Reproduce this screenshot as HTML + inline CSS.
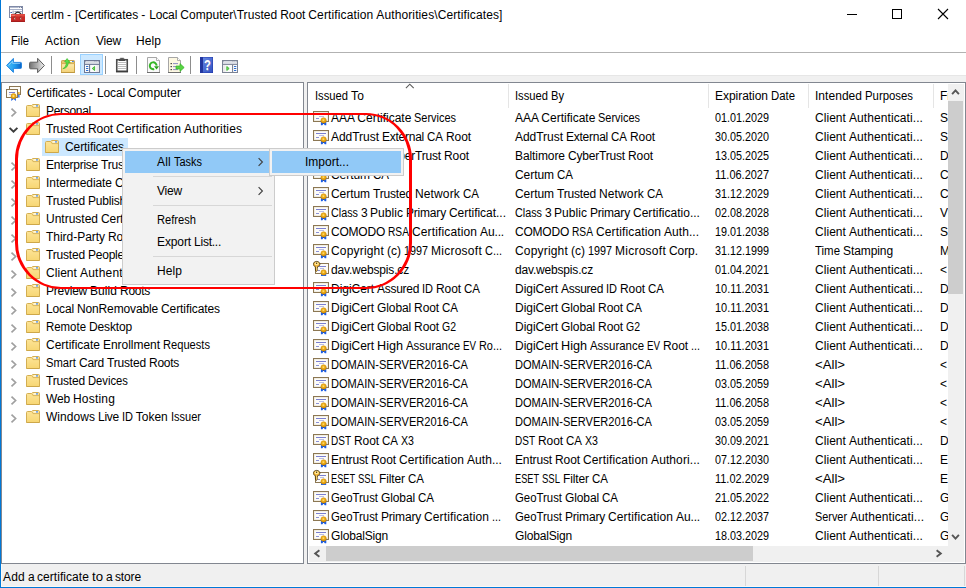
<!DOCTYPE html>
<html><head><meta charset="utf-8"><title>certlm</title>
<style>
html,body{margin:0;padding:0;background:#fff;}
body{width:966px;height:588px;position:relative;overflow:hidden;font-family:"Liberation Sans", sans-serif;font-size:12px;color:#000;}
.w{display:inline-block;transform-origin:0 0;vertical-align:top;}
.t{position:absolute;white-space:nowrap;font-family:"Liberation Sans", sans-serif;font-size:12px;color:#000;}
</style></head><body>

<svg width="0" height="0" style="position:absolute">
<defs>
<linearGradient id="gFold" x1="0" y1="0" x2="0" y2="1"><stop offset="0" stop-color="#fde59a"/><stop offset="1" stop-color="#f7d673"/></linearGradient>
<linearGradient id="gFold2" x1="0" y1="0" x2="0" y2="1"><stop offset="0" stop-color="#fdebad"/><stop offset="1" stop-color="#f3d177"/></linearGradient>
<linearGradient id="gBack" x1="0" y1="0" x2="1" y2="0"><stop offset="0" stop-color="#4fc0f8"/><stop offset="0.55" stop-color="#1e9cee"/><stop offset="1" stop-color="#0a5fc4"/></linearGradient>
<linearGradient id="gFwd" x1="0" y1="0" x2="1" y2="0"><stop offset="0" stop-color="#747474"/><stop offset="0.55" stop-color="#b4b4b4"/><stop offset="1" stop-color="#f2f2f2"/></linearGradient>
<linearGradient id="gHelp" x1="0" y1="0" x2="1" y2="1"><stop offset="0" stop-color="#6c8ee8"/><stop offset="1" stop-color="#2f4fc0"/></linearGradient>
<radialGradient id="gSeal" cx="0.45" cy="0.4" r="0.6"><stop offset="0" stop-color="#fbc93c"/><stop offset="1" stop-color="#d88e00"/></radialGradient>
<symbol id="folder" viewBox="0 0 14 13">
  <path d="M0.5 2.5 Q0.5 1.5 1.5 1.5 H5.6 L6.6 0.5 H12.5 Q13.5 0.5 13.5 1.5 V12.5 H0.5 Z" fill="url(#gFold)" stroke="#d3ae52" stroke-width="1"/>
  <path d="M6 1.9 L7 3.6 H13" fill="none" stroke="#d9b65c" stroke-width="1"/>
  <rect x="7.6" y="1.3" width="4.4" height="1.2" fill="#ffffff"/>
  <rect x="10" y="1.3" width="2" height="1.2" fill="#3f86e8"/>
  <rect x="0.5" y="12" width="13" height="1" fill="#c9a244" opacity="0.6"/>
</symbol>
<symbol id="cert" viewBox="0 0 16 16">
  <rect x="0.5" y="1.5" width="15" height="10" fill="#fdfcf8" stroke="#8c7753" stroke-width="1"/>
  <rect x="1.3" y="2.3" width="13.4" height="8.4" fill="none" stroke="#e9e4d8" stroke-width="0.6"/>
  <rect x="3" y="4" width="10" height="1" fill="#7a7fd0"/>
  <rect x="6" y="6.1" width="5" height="0.8" fill="#a9addf"/>
  <rect x="3" y="8" width="3" height="1" fill="#8a8fd6"/>
  <path d="M7.9 11 L7.9 15.2 L9.4 15.2 L10.6 13.4 L11.8 15.2 L13.3 15.2 L13.3 11 Z" fill="#1a5ce6"/>
  <path d="M9.9 13 L10.6 14 L11.3 13 Z" fill="#0a2a7a"/>
  <circle cx="10.6" cy="10.4" r="2.7" fill="url(#gSeal)" stroke="#d28f00" stroke-width="0.5"/>
  <circle cx="10.4" cy="10.3" r="0.8" fill="#ffdc70"/>
</symbol>
<symbol id="certkey" viewBox="0 0 16 16">
  <rect x="2.5" y="3.5" width="13" height="10" fill="#fdfcf8" stroke="#8c7753" stroke-width="1"/>
  <rect x="5.5" y="6" width="7.5" height="1" fill="#7a7fd0"/>
  <rect x="7" y="8.1" width="4" height="0.8" fill="#a9addf"/>
  <rect x="5" y="10" width="2" height="1" fill="#8a8fd6"/>
  <path d="M8 13 L8 16 L13.2 16 L13.2 13 Z" fill="#1e62e8"/>
  <circle cx="10.6" cy="12.4" r="2.7" fill="url(#gSeal)" stroke="#d28f00" stroke-width="0.5"/>
  <circle cx="10.4" cy="12.3" r="0.8" fill="#ffdc70"/>
  <g transform="translate(0,0.8)">
  <path d="M3.6 0.6 C1.6 0.6 0.3 1.9 0.3 3.4 C0.3 4.6 1.2 5.5 2.3 5.9 L2.5 9.8 L3.5 10.5 L4.5 9.6 L4.1 8.9 L4.7 8.3 L4.2 7.6 L4.6 5.9 C6 5.5 6.9 4.6 6.9 3.4 C6.9 1.9 5.6 0.6 3.6 0.6 Z" fill="#f0b030" stroke="#3a2806" stroke-width="0.75"/>
  <path d="M3.1 5.6 L3.2 9.4 L3.8 9.4 L3.7 5.6 Z" fill="#ffe9a0"/>
  <ellipse cx="3.7" cy="2.9" rx="2.1" ry="1.6" fill="#ffe79a"/>
  <circle cx="3.6" cy="2.5" r="0.7" fill="#4a3508"/>
</g>
</symbol>
<symbol id="certroot" viewBox="0 0 16 16">
  <rect x="3.5" y="0.5" width="11" height="8" fill="#fdfcf8" stroke="#8c7753" stroke-width="1"/>
  <rect x="0.5" y="3.5" width="11" height="8" fill="#fdfcf8" stroke="#8c7753" stroke-width="1"/>
  <rect x="3" y="6" width="6" height="1" fill="#7a7fd0"/>
  <rect x="3" y="8" width="3" height="0.8" fill="#a9addf"/>
  <path d="M5.4 11 L5.2 15 L7.6 13 L10 15 L9.8 11 Z" fill="#1e62e8"/>
  <rect x="12.1" y="6" width="1.5" height="2.7" fill="#e7a416"/>
  <rect x="12.2" y="8.6" width="1.3" height="3" fill="#1e62e8"/>
  <circle cx="7.6" cy="10.2" r="2.6" fill="url(#gSeal)" stroke="#d28f00" stroke-width="0.5"/>
  <circle cx="7.5" cy="10.1" r="0.9" fill="#ffe58a"/>
</symbol>
</defs>
</svg>

<div style="position:absolute;left:0px;top:52px;width:966px;height:1px;background:#b2b2b2"></div><div style="position:absolute;left:0px;top:75px;width:966px;height:7px;background:#f0f0f0"></div><div style="position:absolute;left:0px;top:75px;width:966px;height:1px;background:#e6e6e6"></div><div style="position:absolute;left:0px;top:82px;width:966px;height:506px;background:#f0f0f0"></div><div style="position:absolute;left:1px;top:82px;width:303px;height:482px;background:#fff;border:1px solid #828790;box-sizing:border-box"></div><div style="position:absolute;left:307px;top:82px;width:659px;height:482px;background:#fff;border:1px solid #828790;box-sizing:border-box"></div><div style="position:absolute;left:0px;top:564px;width:966px;height:23px;background:#f0f0f0"></div><div style="position:absolute;left:745px;top:566px;width:1px;height:20px;background:#d7d7d7"></div><div style="position:absolute;left:878px;top:566px;width:1px;height:20px;background:#d7d7d7"></div><div style="position:absolute;left:964px;top:566px;width:1px;height:20px;background:#d7d7d7"></div><div style="position:absolute;left:1px;top:564px;width:1px;height:23px;background:#fbf8f5"></div><div style="position:absolute;left:1px;top:586px;width:965px;height:1px;background:#fbf8f5"></div><div style="position:absolute;left:0px;top:0px;width:1px;height:588px;background:#0078d7"></div><div style="position:absolute;left:0px;top:587px;width:966px;height:1px;background:#0078d7"></div><svg style="position:absolute;left:8px;top:5px" width="18" height="18" viewBox="0 0 18 18">
<rect x="1.5" y="1.5" width="13" height="11" fill="#fdfdfe" stroke="#7f89a6" stroke-width="1"/>
<rect x="2" y="2" width="8.6" height="1" fill="#b4bccf"/>
<rect x="11.2" y="2" width="1" height="1" fill="#6b7693"/><rect x="13" y="2" width="1" height="1" fill="#6b7693"/>
<rect x="2" y="4" width="12" height="1" fill="#a9b2c9"/>
<rect x="4.6" y="5.6" width="1" height="7" fill="#9aa4bd"/>
<rect x="2.4" y="7" width="1.6" height="1" fill="#3d65b0"/>
<rect x="6.4" y="6" width="8" height="0.9" fill="#9aa4bd"/>
<path d="M6.4 9.6 Q9.9 4.6 13.4 9.6" fill="none" stroke="#2e2e2e" stroke-width="1.3"/>
<rect x="3" y="9" width="14" height="8" rx="0.7" fill="#c92b27"/>
<rect x="3" y="9" width="14" height="2.4" rx="0.7" fill="#dc4a40"/>
<rect x="3.6" y="10" width="3.4" height="0.7" fill="#ee8a80"/>
<rect x="3" y="15.8" width="14" height="1.2" fill="#a51c1c"/>
<rect x="6" y="12" width="1.4" height="2.6" fill="#e4d6c8" stroke="#8e1f1c" stroke-width="0.5"/><rect x="12" y="12" width="1.4" height="2.6" fill="#e4d6c8" stroke="#8e1f1c" stroke-width="0.5"/>
</svg><span class="t" style="left:31px;top:6px;line-height:18px;word-spacing:-0.34px;"><span style="letter-spacing:0.06px">certlm</span> <span style="letter-spacing:1.01px">-</span> <span style="letter-spacing:-0.02px">[Certificates</span> <span style="letter-spacing:1.01px">-</span> <span style="letter-spacing:-0.13px">Local</span> <span style="letter-spacing:0.05px">Computer\Trusted</span> <span style="letter-spacing:-0.08px">Root</span> <span style="letter-spacing:0.13px">Certification</span> <span style="letter-spacing:0.11px">Authorities\Certificates]</span></span><div style="position:absolute;left:847px;top:14px;width:10px;height:1px;background:#000"></div><div style="position:absolute;left:892px;top:9px;width:10px;height:10px;border:1px solid #000;box-sizing:border-box"></div><svg style="position:absolute;left:937px;top:8px" width="12" height="12" viewBox="0 0 12 12"><path d="M1 1 L11 11 M11 1 L1 11" stroke="#000" stroke-width="1.1" fill="none"/></svg><span class="t" style="left:11px;top:32px;line-height:18px;"><span class="w" style="width:18.00px;transform:scaleX(0.9305)">File</span></span><span class="t" style="left:45px;top:32px;line-height:18px;"><span style="letter-spacing:0.27px">Action</span></span><span class="t" style="left:96px;top:32px;line-height:18px;"><span style="letter-spacing:-0.20px">View</span></span><span class="t" style="left:136px;top:32px;line-height:18px;"><span style="letter-spacing:0.08px">Help</span></span><svg style="position:absolute;left:6px;top:57px" width="18" height="17" viewBox="0 0 18 17"><path d="M0.6 8.4 L7.4 1.4 L7.4 5.4 L14.6 5.4 Q15.5 5.4 15.5 6.3 L15.5 10.5 Q15.5 11.4 14.6 11.4 L7.4 11.4 L7.4 15.4 Z" fill="url(#gBack)" stroke="#2486e0" stroke-width="1" stroke-linejoin="round"/><path d="M2.6 8.4 L6.6 4.3 L6.6 6.4 L14.2 6.4" fill="none" stroke="#a8e0ff" stroke-width="0.9" opacity="0.75"/></svg><svg style="position:absolute;left:28px;top:57px" width="18" height="17" viewBox="0 0 18 17"><path d="M16.4 8.5 L9.6 1.3 L9.6 5.2 L2.6 5.2 Q1.6 5.2 1.6 6.2 L1.6 10.8 Q1.6 11.8 2.6 11.8 L9.6 11.8 L9.6 15.7 Z" fill="url(#gFwd)" stroke="#5d5d5d" stroke-width="1" stroke-linejoin="round"/></svg><div style="position:absolute;left:51px;top:56px;width:1px;height:18px;background:#8d8d8d"></div><div style="position:absolute;left:105px;top:56px;width:1px;height:18px;background:#8d8d8d"></div><div style="position:absolute;left:136px;top:56px;width:1px;height:18px;background:#8d8d8d"></div><div style="position:absolute;left:190px;top:56px;width:1px;height:18px;background:#8d8d8d"></div><svg style="position:absolute;left:60px;top:57px" width="16" height="17" viewBox="0 0 16 17">
<path d="M1.5 7 V4.3 Q1.5 3.5 2.3 3.5 H13.7 Q14.5 3.5 14.5 4.3 V7 Z" fill="#e8c46c" stroke="#c9a250" stroke-width="1"/>
<rect x="10" y="4" width="2.2" height="1" fill="#ffffff"/><rect x="12" y="4" width="1.8" height="1" fill="#3f8ae8"/>
<rect x="1.5" y="6.6" width="13" height="8.9" fill="url(#gFold2)" stroke="#d4ae58" stroke-width="1"/>
<rect x="1" y="15" width="14" height="1" fill="#bf9840"/>
<rect x="14" y="7" width="1" height="8.5" fill="#c9a24a"/>
<path d="M2.8 11.7 C5 10.8 6.3 8.4 6.3 5.3 L4.6 4.8 L7.1 1.5 L10.2 5.8 L8.3 5.4 C8.3 9 6.3 11.4 2.8 11.7 Z" fill="#5bdc48" stroke="#35b828" stroke-width="0.6"/>
</svg><div style="position:absolute;left:80px;top:54px;width:23px;height:21px;background:#cce8ff;border:1px solid #99d1ff;box-sizing:border-box"></div><svg style="position:absolute;left:84px;top:60px" width="16" height="13" viewBox="0 0 16 13">
<rect x="0.5" y="0.5" width="15" height="12" fill="#fbfbfc" stroke="#6e7894" stroke-width="1"/>
<rect x="1" y="1" width="14" height="1.6" fill="#8a93ab"/>
<rect x="1.6" y="1.3" width="9" height="0.9" fill="#f2f4f8"/>
<rect x="11.4" y="1.2" width="1.1" height="1.1" fill="#fff"/><rect x="13.3" y="1.2" width="1.1" height="1.1" fill="#fff"/>
<rect x="1" y="2.6" width="14" height="0.8" fill="#ffffff"/>
<rect x="1" y="3.4" width="14" height="0.7" fill="#b3bacb"/>
<rect x="0.5" y="4.1" width="15" height="0.9" fill="#6e7894"/>
<rect x="5" y="4.5" width="1.1" height="8" fill="#6e7894"/>
<rect x="12.4" y="5" width="2.6" height="7" fill="#ececec"/>
<rect x="2" y="6" width="2.3" height="1" fill="#2f6fd0"/><rect x="2" y="8" width="2.3" height="1" fill="#2f6fd0"/><rect x="2" y="10" width="2.3" height="1" fill="#2f6fd0"/>
<path d="M10.6 6.5 L8.2 8.5 L10.6 10.5 Z" fill="#7bdc6c" stroke="#2fb020" stroke-width="0.8"/>
</svg><svg style="position:absolute;left:115px;top:57px" width="14" height="16" viewBox="0 0 14 16">
<rect x="1.75" y="2.75" width="10.5" height="11.5" fill="#ffffff" stroke="#4c4c4c" stroke-width="1.6"/>
<rect x="4" y="1.8" width="6" height="2.2" fill="#4a4a4a"/>
<rect x="5.2" y="0.8" width="3.6" height="1.4" fill="#5a5a5a"/>
<rect x="3" y="5" width="8" height="1" fill="#bdbdbd"/><rect x="3" y="7" width="8" height="1" fill="#bdbdbd"/><rect x="3" y="9" width="8" height="1" fill="#bdbdbd"/><rect x="3" y="11" width="8" height="1" fill="#bdbdbd"/>
<rect x="1" y="14" width="12" height="1.4" fill="#3c3c3c"/>
</svg><svg style="position:absolute;left:146px;top:56px" width="15" height="18" viewBox="0 0 15 18">
<path d="M1.5 1.5 H10.5 L13.5 4.5 V16.5 H1.5 Z" fill="#fafafa" stroke="#a6a6a6" stroke-width="1"/>
<path d="M10.5 1.5 V4.5 H13.5" fill="#fff" stroke="#9a9a9a" stroke-width="0.8"/>
<rect x="1" y="16" width="13" height="1" fill="#6f6f6f"/>
<path d="M10.6 9.6 A3.4 3.4 0 1 0 8.2 13" fill="none" stroke="#35b526" stroke-width="2"/>
<path d="M8 10.2 L13 10.2 L10.6 13.6 Z" fill="#2aa01c"/>
</svg><svg style="position:absolute;left:167px;top:56px" width="18" height="18" viewBox="0 0 18 18">
<path d="M1.5 1.5 H10.5 L13.5 4.5 V16.5 H1.5 Z" fill="#fdf8e2" stroke="#a6a6a6" stroke-width="1"/>
<path d="M10.5 1.5 V4.5 H13.5" fill="#fff" stroke="#9a9a9a" stroke-width="0.8"/>
<rect x="1" y="16" width="13" height="1" fill="#6f6f6f"/>
<rect x="3.6" y="7" width="1.2" height="1.2" fill="#222"/><rect x="3.6" y="10" width="1.2" height="1.2" fill="#222"/><rect x="3.6" y="13" width="1.2" height="1.2" fill="#222"/>
<rect x="6" y="7.1" width="5" height="1" fill="#8d8bc4"/><rect x="6" y="10.1" width="4" height="1" fill="#8d8bc4"/><rect x="6" y="13.1" width="5" height="1" fill="#8d8bc4"/>
<path d="M9 10 H13 V7.6 L17.2 11.5 L13 15.4 V13 H9 Z" fill="#59d445" stroke="#35b526" stroke-width="0.7"/>
</svg><svg style="position:absolute;left:200px;top:57px" width="13" height="16" viewBox="0 0 13 16">
<rect x="0" y="0" width="13" height="16" fill="url(#gHelp)"/>
<rect x="0" y="0" width="3" height="16" fill="#23369c"/>
<rect x="0" y="0" width="13" height="16" fill="none" stroke="#2238a8" stroke-width="1"/>
</svg><span class="t" style="left:204.4px;top:56px;line-height:18px;font-size:15.5px;font-weight:bold;color:#fff;transform:scaleX(0.72);transform-origin:0 0;text-shadow:0.5px 0.7px 0 #7d88c4">?</span><svg style="position:absolute;left:222px;top:60px" width="16" height="13" viewBox="0 0 16 13">
<rect x="0.5" y="0.5" width="15" height="12" fill="#fbfbfc" stroke="#7c8394" stroke-width="1"/>
<rect x="1" y="1" width="14" height="1.6" fill="#9aa0b2"/>
<rect x="1.6" y="1.3" width="9" height="0.9" fill="#f2f4f8"/>
<rect x="11.4" y="1.2" width="1.1" height="1.1" fill="#fff"/><rect x="13.3" y="1.2" width="1.1" height="1.1" fill="#fff"/>
<rect x="1" y="2.6" width="14" height="0.8" fill="#ffffff"/>
<rect x="1" y="3.4" width="14" height="0.7" fill="#bcc1cf"/>
<rect x="0.5" y="4.1" width="15" height="0.9" fill="#7c8394"/>
<rect x="10" y="4.5" width="1.1" height="8" fill="#7c8394"/>
<rect x="1" y="5" width="2.4" height="7" fill="#ececec"/>
<rect x="12" y="6" width="2.3" height="1" fill="#2f6fd0"/><rect x="12" y="8" width="2.3" height="1" fill="#2f6fd0"/><rect x="12" y="10" width="2.3" height="1" fill="#2f6fd0"/>
<path d="M4.8 6.5 L7.2 8.5 L4.8 10.5 Z" fill="#7bdc6c" stroke="#2fb020" stroke-width="0.8"/>
</svg><svg style="position:absolute;left:6px;top:86px" width="16" height="16"><use href="#certroot"/></svg><span class="t" style="left:27px;top:84px;line-height:18px;word-spacing:-0.34px;"><span style="letter-spacing:-0.09px">Certificates</span> <span style="letter-spacing:1.00px">-</span> <span style="letter-spacing:-0.14px">Local</span> <span style="letter-spacing:0.04px">Computer</span></span><svg style="position:absolute;left:26px;top:104px" width="14" height="13"><use href="#folder"/></svg><span class="t" style="left:46px;top:102px;line-height:18px;"><span style="letter-spacing:-0.30px">Personal</span></span><svg style="position:absolute;left:10px;top:106px" width="8" height="14" viewBox="0 0 8 14"><path d="M1.5 0.6 L5.6 4.5 L1.5 8.4" transform="translate(0,2)" fill="none" stroke="#a0a0a0" stroke-width="1.7"/></svg><svg style="position:absolute;left:26px;top:122px" width="14" height="13"><use href="#folder"/></svg><span class="t" style="left:46px;top:120px;line-height:18px;word-spacing:-0.34px;"><span style="letter-spacing:-0.18px">Trusted</span> <span style="letter-spacing:-0.09px">Root</span> <span style="letter-spacing:0.13px">Certification</span> <span style="letter-spacing:0.12px">Authorities</span></span><svg style="position:absolute;left:8px;top:126px" width="11" height="8" viewBox="0 0 11 8"><path d="M1.6 1.8 L5.5 5.7 L9.4 1.8" fill="none" stroke="#3c3c3c" stroke-width="1.9"/></svg><div style="position:absolute;left:42px;top:138px;width:86px;height:18px;background:#cce8ff"></div><svg style="position:absolute;left:45px;top:140px" width="14" height="13"><use href="#folder"/></svg><span class="t" style="left:65px;top:138px;line-height:18px;"><span style="letter-spacing:-0.09px">Certificates</span></span><svg style="position:absolute;left:26px;top:158px" width="14" height="13"><use href="#folder"/></svg><span class="t" style="left:46px;top:156px;line-height:18px;word-spacing:-0.34px;"><span style="letter-spacing:-0.27px">Enterprise</span> <span style="letter-spacing:-0.18px">Trust</span></span><svg style="position:absolute;left:10px;top:160px" width="8" height="14" viewBox="0 0 8 14"><path d="M1.5 0.6 L5.6 4.5 L1.5 8.4" transform="translate(0,2)" fill="none" stroke="#a0a0a0" stroke-width="1.7"/></svg><svg style="position:absolute;left:26px;top:176px" width="14" height="13"><use href="#folder"/></svg><span class="t" style="left:46px;top:174px;line-height:18px;word-spacing:-0.34px;"><span style="letter-spacing:-0.06px">Intermediate</span> <span style="letter-spacing:0.13px">Certification</span> <span style="letter-spacing:0.12px">Authorities</span></span><svg style="position:absolute;left:10px;top:178px" width="8" height="14" viewBox="0 0 8 14"><path d="M1.5 0.6 L5.6 4.5 L1.5 8.4" transform="translate(0,2)" fill="none" stroke="#a0a0a0" stroke-width="1.7"/></svg><svg style="position:absolute;left:26px;top:194px" width="14" height="13"><use href="#folder"/></svg><span class="t" style="left:46px;top:192px;line-height:18px;word-spacing:-0.34px;"><span style="letter-spacing:-0.18px">Trusted</span> <span style="letter-spacing:-0.20px">Publishers</span></span><svg style="position:absolute;left:10px;top:196px" width="8" height="14" viewBox="0 0 8 14"><path d="M1.5 0.6 L5.6 4.5 L1.5 8.4" transform="translate(0,2)" fill="none" stroke="#a0a0a0" stroke-width="1.7"/></svg><svg style="position:absolute;left:26px;top:212px" width="14" height="13"><use href="#folder"/></svg><span class="t" style="left:46px;top:210px;line-height:18px;word-spacing:-0.34px;">Untrusted <span style="letter-spacing:-0.09px">Certificates</span></span><svg style="position:absolute;left:10px;top:214px" width="8" height="14" viewBox="0 0 8 14"><path d="M1.5 0.6 L5.6 4.5 L1.5 8.4" transform="translate(0,2)" fill="none" stroke="#a0a0a0" stroke-width="1.7"/></svg><svg style="position:absolute;left:26px;top:230px" width="14" height="13"><use href="#folder"/></svg><span class="t" style="left:46px;top:228px;line-height:18px;word-spacing:-0.34px;"><span style="letter-spacing:-0.03px">Third-Party</span> <span style="letter-spacing:-0.09px">Root</span> <span style="letter-spacing:0.13px">Certification</span> <span style="letter-spacing:0.12px">Authorities</span></span><svg style="position:absolute;left:10px;top:232px" width="8" height="14" viewBox="0 0 8 14"><path d="M1.5 0.6 L5.6 4.5 L1.5 8.4" transform="translate(0,2)" fill="none" stroke="#a0a0a0" stroke-width="1.7"/></svg><svg style="position:absolute;left:26px;top:248px" width="14" height="13"><use href="#folder"/></svg><span class="t" style="left:46px;top:246px;line-height:18px;word-spacing:-0.34px;"><span style="letter-spacing:-0.18px">Trusted</span> <span style="letter-spacing:-0.23px">People</span></span><svg style="position:absolute;left:10px;top:250px" width="8" height="14" viewBox="0 0 8 14"><path d="M1.5 0.6 L5.6 4.5 L1.5 8.4" transform="translate(0,2)" fill="none" stroke="#a0a0a0" stroke-width="1.7"/></svg><svg style="position:absolute;left:26px;top:266px" width="14" height="13"><use href="#folder"/></svg><span class="t" style="left:46px;top:264px;line-height:18px;word-spacing:-0.34px;"><span style="letter-spacing:0.05px">Client</span> <span style="letter-spacing:0.21px">Authentication</span> <span class="w" style="width:35.00px;transform:scaleX(0.9047)">Issuers</span></span><svg style="position:absolute;left:10px;top:268px" width="8" height="14" viewBox="0 0 8 14"><path d="M1.5 0.6 L5.6 4.5 L1.5 8.4" transform="translate(0,2)" fill="none" stroke="#a0a0a0" stroke-width="1.7"/></svg><svg style="position:absolute;left:26px;top:284px" width="14" height="13"><use href="#folder"/></svg><span class="t" style="left:46px;top:282px;line-height:18px;word-spacing:-0.34px;"><span style="letter-spacing:-0.24px">Preview</span> <span style="letter-spacing:0.06px">Build</span> <span style="letter-spacing:-0.27px">Roots</span></span><svg style="position:absolute;left:10px;top:286px" width="8" height="14" viewBox="0 0 8 14"><path d="M1.5 0.6 L5.6 4.5 L1.5 8.4" transform="translate(0,2)" fill="none" stroke="#a0a0a0" stroke-width="1.7"/></svg><svg style="position:absolute;left:26px;top:302px" width="14" height="13"><use href="#folder"/></svg><span class="t" style="left:46px;top:300px;line-height:18px;word-spacing:-0.34px;"><span style="letter-spacing:-0.14px">Local</span> <span style="letter-spacing:-0.14px">NonRemovable</span> <span style="letter-spacing:-0.09px">Certificates</span></span><svg style="position:absolute;left:10px;top:304px" width="8" height="14" viewBox="0 0 8 14"><path d="M1.5 0.6 L5.6 4.5 L1.5 8.4" transform="translate(0,2)" fill="none" stroke="#a0a0a0" stroke-width="1.7"/></svg><svg style="position:absolute;left:26px;top:320px" width="14" height="13"><use href="#folder"/></svg><span class="t" style="left:46px;top:318px;line-height:18px;word-spacing:-0.34px;"><span class="w" style="width:40.00px;transform:scaleX(0.9517)">Remote</span> <span style="letter-spacing:-0.15px">Desktop</span></span><svg style="position:absolute;left:10px;top:322px" width="8" height="14" viewBox="0 0 8 14"><path d="M1.5 0.6 L5.6 4.5 L1.5 8.4" transform="translate(0,2)" fill="none" stroke="#a0a0a0" stroke-width="1.7"/></svg><svg style="position:absolute;left:26px;top:338px" width="14" height="13"><use href="#folder"/></svg><span class="t" style="left:46px;top:336px;line-height:18px;word-spacing:-0.34px;">Certificate <span style="letter-spacing:-0.04px">Enrollment</span> <span class="w" style="width:47.00px;transform:scaleX(0.9270)">Requests</span></span><svg style="position:absolute;left:10px;top:340px" width="8" height="14" viewBox="0 0 8 14"><path d="M1.5 0.6 L5.6 4.5 L1.5 8.4" transform="translate(0,2)" fill="none" stroke="#a0a0a0" stroke-width="1.7"/></svg><svg style="position:absolute;left:26px;top:356px" width="14" height="13"><use href="#folder"/></svg><span class="t" style="left:46px;top:354px;line-height:18px;word-spacing:-0.34px;"><span class="w" style="width:30.00px;transform:scaleX(0.9370)">Smart</span> <span style="letter-spacing:-0.25px">Card</span> <span style="letter-spacing:-0.18px">Trusted</span> <span style="letter-spacing:-0.27px">Roots</span></span><svg style="position:absolute;left:10px;top:358px" width="8" height="14" viewBox="0 0 8 14"><path d="M1.5 0.6 L5.6 4.5 L1.5 8.4" transform="translate(0,2)" fill="none" stroke="#a0a0a0" stroke-width="1.7"/></svg><svg style="position:absolute;left:26px;top:374px" width="14" height="13"><use href="#folder"/></svg><span class="t" style="left:46px;top:372px;line-height:18px;word-spacing:-0.34px;"><span style="letter-spacing:-0.18px">Trusted</span> <span class="w" style="width:40.00px;transform:scaleX(0.9370)">Devices</span></span><svg style="position:absolute;left:10px;top:376px" width="8" height="14" viewBox="0 0 8 14"><path d="M1.5 0.6 L5.6 4.5 L1.5 8.4" transform="translate(0,2)" fill="none" stroke="#a0a0a0" stroke-width="1.7"/></svg><svg style="position:absolute;left:26px;top:392px" width="14" height="13"><use href="#folder"/></svg><span class="t" style="left:46px;top:390px;line-height:18px;word-spacing:-0.34px;"><span style="letter-spacing:-0.16px">Web</span> <span style="letter-spacing:0.19px">Hosting</span></span><svg style="position:absolute;left:10px;top:394px" width="8" height="14" viewBox="0 0 8 14"><path d="M1.5 0.6 L5.6 4.5 L1.5 8.4" transform="translate(0,2)" fill="none" stroke="#a0a0a0" stroke-width="1.7"/></svg><svg style="position:absolute;left:26px;top:410px" width="14" height="13"><use href="#folder"/></svg><span class="t" style="left:46px;top:408px;line-height:18px;word-spacing:-0.34px;"><span style="letter-spacing:0.04px">Windows</span> <span style="letter-spacing:-0.25px">Live</span> <span class="w" style="width:11.00px;transform:scaleX(0.9167)">ID</span> Token <span class="w" style="width:30.00px;transform:scaleX(0.9178)">Issuer</span></span><svg style="position:absolute;left:10px;top:412px" width="8" height="14" viewBox="0 0 8 14"><path d="M1.5 0.6 L5.6 4.5 L1.5 8.4" transform="translate(0,2)" fill="none" stroke="#a0a0a0" stroke-width="1.7"/></svg><span class="t" style="left:315px;top:87px;line-height:18px;word-spacing:-0.34px;"><span class="w" style="width:33.00px;transform:scaleX(0.9333)">Issued</span> <span style="letter-spacing:0.16px">To</span></span><span class="t" style="left:515px;top:87px;line-height:18px;word-spacing:-0.34px;"><span class="w" style="width:33.00px;transform:scaleX(0.9333)">Issued</span> <span class="w" style="width:13.00px;transform:scaleX(0.9275)">By</span></span><span class="t" style="left:715px;top:87px;line-height:18px;word-spacing:-0.34px;"><span style="letter-spacing:-0.04px">Expiration</span> <span class="w" style="width:24.00px;transform:scaleX(0.9464)">Date</span></span><span class="t" style="left:815px;top:87px;line-height:18px;word-spacing:-0.34px;"><span style="letter-spacing:0.04px">Intended</span> <span class="w" style="width:48.00px;transform:scaleX(0.9467)">Purposes</span></span><div style="position:absolute;left:508px;top:84px;width:1px;height:24px;background:#e5e5e5"></div><div style="position:absolute;left:708px;top:84px;width:1px;height:24px;background:#e5e5e5"></div><div style="position:absolute;left:808px;top:84px;width:1px;height:24px;background:#e5e5e5"></div><div style="position:absolute;left:933px;top:84px;width:1px;height:24px;background:#e5e5e5"></div><svg style="position:absolute;left:405px;top:83px" width="10" height="7" viewBox="0 0 10 7"><path d="M0.9 5.2 L4.8 1.2 L8.7 5.2" fill="none" stroke="#5a5a5a" stroke-width="1.1"/></svg><div style="position:absolute;left:934px;top:84px;width:14px;height:462px;overflow:hidden"><span class="t" style="left:6px;top:3px;line-height:18px;word-spacing:-0.34px;"><span style="letter-spacing:-0.09px">Friendly</span> <span style="letter-spacing:-0.25px">Name</span></span><span class="t" style="left:6px;top:25px;line-height:19px;"><span style="letter-spacing:-2.02px">S</span></span><span class="t" style="left:6px;top:44px;line-height:19px;"><span style="letter-spacing:-2.02px">S</span></span><span class="t" style="left:6px;top:63px;line-height:19px;"><span style="letter-spacing:-0.67px">D</span></span><span class="t" style="left:6px;top:82px;line-height:19px;"><span style="letter-spacing:-0.67px">C</span></span><span class="t" style="left:6px;top:101px;line-height:19px;"><span style="letter-spacing:-0.67px">C</span></span><span class="t" style="left:6px;top:120px;line-height:19px;"><span style="letter-spacing:-1.02px">V</span></span><span class="t" style="left:6px;top:139px;line-height:19px;"><span style="letter-spacing:-2.02px">S</span></span><span class="t" style="left:6px;top:158px;line-height:19px;"><span style="letter-spacing:1.00px">M</span></span><span class="t" style="left:6px;top:177px;line-height:19px;"><span style="letter-spacing:0.98px">&lt;</span></span><span class="t" style="left:6px;top:196px;line-height:19px;"><span style="letter-spacing:-0.67px">D</span></span><span class="t" style="left:6px;top:215px;line-height:19px;"><span style="letter-spacing:-0.67px">D</span></span><span class="t" style="left:6px;top:234px;line-height:19px;"><span style="letter-spacing:-0.67px">D</span></span><span class="t" style="left:6px;top:253px;line-height:19px;"><span style="letter-spacing:-0.67px">D</span></span><span class="t" style="left:6px;top:272px;line-height:19px;"><span style="letter-spacing:0.98px">&lt;</span></span><span class="t" style="left:6px;top:291px;line-height:19px;"><span style="letter-spacing:0.98px">&lt;</span></span><span class="t" style="left:6px;top:310px;line-height:19px;"><span style="letter-spacing:0.98px">&lt;</span></span><span class="t" style="left:6px;top:329px;line-height:19px;"><span style="letter-spacing:0.98px">&lt;</span></span><span class="t" style="left:6px;top:348px;line-height:19px;"><span style="letter-spacing:-0.67px">D</span></span><span class="t" style="left:6px;top:367px;line-height:19px;"><span style="letter-spacing:-2.02px">E</span></span><span class="t" style="left:6px;top:386px;line-height:19px;"><span style="letter-spacing:-2.02px">E</span></span><span class="t" style="left:6px;top:405px;line-height:19px;"><span style="letter-spacing:-1.34px">G</span></span><span class="t" style="left:6px;top:424px;line-height:19px;"><span style="letter-spacing:-1.34px">G</span></span><span class="t" style="left:6px;top:443px;line-height:19px;"><span style="letter-spacing:-1.34px">G</span></span></div><svg style="position:absolute;left:313px;top:110px" width="16" height="16"><use href="#cert"/></svg><span class="t" style="left:331px;top:109px;line-height:19px;word-spacing:-0.34px;">AAA Certificate <span class="w" style="width:42.00px;transform:scaleX(0.9127)">Services</span></span><span class="t" style="left:515px;top:109px;line-height:19px;word-spacing:-0.34px;">AAA Certificate <span class="w" style="width:42.00px;transform:scaleX(0.9127)">Services</span></span><span class="t" style="left:715px;top:109px;line-height:19px;"><span class="w" style="width:54.00px;transform:scaleX(0.8991)">01.01.2029</span></span><span class="t" style="left:815px;top:109px;line-height:19px;word-spacing:-0.34px;"><span style="letter-spacing:0.05px">Client</span> <span style="letter-spacing:0.09px">Authenticati...</span></span><svg style="position:absolute;left:313px;top:129px" width="16" height="16"><use href="#cert"/></svg><span class="t" style="left:331px;top:128px;line-height:19px;word-spacing:-0.34px;"><span style="letter-spacing:-0.03px">AddTrust</span> <span style="letter-spacing:-0.25px">External</span> <span class="w" style="width:16.00px;transform:scaleX(0.9597)">CA</span> <span style="letter-spacing:-0.09px">Root</span></span><span class="t" style="left:515px;top:128px;line-height:19px;word-spacing:-0.34px;"><span style="letter-spacing:-0.03px">AddTrust</span> <span style="letter-spacing:-0.25px">External</span> <span class="w" style="width:16.00px;transform:scaleX(0.9597)">CA</span> <span style="letter-spacing:-0.09px">Root</span></span><span class="t" style="left:715px;top:128px;line-height:19px;"><span class="w" style="width:54.00px;transform:scaleX(0.8991)">30.05.2020</span></span><span class="t" style="left:815px;top:128px;line-height:19px;word-spacing:-0.34px;"><span style="letter-spacing:0.05px">Client</span> <span style="letter-spacing:0.09px">Authenticati...</span></span><svg style="position:absolute;left:313px;top:148px" width="16" height="16"><use href="#cert"/></svg><span class="t" style="left:331px;top:147px;line-height:19px;word-spacing:-0.34px;"><span style="letter-spacing:-0.08px">Baltimore</span> <span style="letter-spacing:-0.19px">CyberTrust</span> <span style="letter-spacing:-0.09px">Root</span></span><span class="t" style="left:515px;top:147px;line-height:19px;word-spacing:-0.34px;"><span style="letter-spacing:-0.08px">Baltimore</span> <span style="letter-spacing:-0.19px">CyberTrust</span> <span style="letter-spacing:-0.09px">Root</span></span><span class="t" style="left:715px;top:147px;line-height:19px;"><span class="w" style="width:54.00px;transform:scaleX(0.8991)">13.05.2025</span></span><span class="t" style="left:815px;top:147px;line-height:19px;word-spacing:-0.34px;"><span style="letter-spacing:0.05px">Client</span> <span style="letter-spacing:0.09px">Authenticati...</span></span><svg style="position:absolute;left:313px;top:167px" width="16" height="16"><use href="#cert"/></svg><span class="t" style="left:331px;top:166px;line-height:19px;word-spacing:-0.34px;"><span style="letter-spacing:-0.06px">Certum</span> <span class="w" style="width:16.00px;transform:scaleX(0.9597)">CA</span></span><span class="t" style="left:515px;top:166px;line-height:19px;word-spacing:-0.34px;"><span style="letter-spacing:-0.06px">Certum</span> <span class="w" style="width:16.00px;transform:scaleX(0.9597)">CA</span></span><span class="t" style="left:715px;top:166px;line-height:19px;"><span class="w" style="width:54.00px;transform:scaleX(0.9126)">11.06.2027</span></span><span class="t" style="left:815px;top:166px;line-height:19px;word-spacing:-0.34px;"><span style="letter-spacing:0.05px">Client</span> <span style="letter-spacing:0.09px">Authenticati...</span></span><svg style="position:absolute;left:313px;top:186px" width="16" height="16"><use href="#cert"/></svg><span class="t" style="left:331px;top:185px;line-height:19px;word-spacing:-0.34px;"><span style="letter-spacing:-0.06px">Certum</span> <span style="letter-spacing:-0.18px">Trusted</span> <span style="letter-spacing:0.14px">Network</span> <span class="w" style="width:16.00px;transform:scaleX(0.9597)">CA</span></span><span class="t" style="left:515px;top:185px;line-height:19px;word-spacing:-0.34px;"><span style="letter-spacing:-0.06px">Certum</span> <span style="letter-spacing:-0.18px">Trusted</span> <span style="letter-spacing:0.14px">Network</span> <span class="w" style="width:16.00px;transform:scaleX(0.9597)">CA</span></span><span class="t" style="left:715px;top:185px;line-height:19px;"><span class="w" style="width:54.00px;transform:scaleX(0.8991)">31.12.2029</span></span><span class="t" style="left:815px;top:185px;line-height:19px;word-spacing:-0.34px;"><span style="letter-spacing:0.05px">Client</span> <span style="letter-spacing:0.09px">Authenticati...</span></span><svg style="position:absolute;left:313px;top:205px" width="16" height="16"><use href="#cert"/></svg><span class="t" style="left:331px;top:204px;line-height:19px;word-spacing:-0.34px;"><span class="w" style="width:27.00px;transform:scaleX(0.8995)">Class</span> <span style="letter-spacing:-0.69px">3</span> <span style="letter-spacing:0.05px">Public</span> <span style="letter-spacing:-0.19px">Primary</span> <span style="letter-spacing:-0.03px">Certificat...</span></span><span class="t" style="left:515px;top:204px;line-height:19px;word-spacing:-0.34px;"><span class="w" style="width:27.00px;transform:scaleX(0.8995)">Class</span> <span style="letter-spacing:-0.69px">3</span> <span style="letter-spacing:0.05px">Public</span> <span style="letter-spacing:-0.19px">Primary</span> <span style="letter-spacing:0.02px">Certificatio...</span></span><span class="t" style="left:715px;top:204px;line-height:19px;"><span class="w" style="width:54.00px;transform:scaleX(0.8991)">02.08.2028</span></span><span class="t" style="left:815px;top:204px;line-height:19px;word-spacing:-0.34px;"><span style="letter-spacing:0.05px">Client</span> <span style="letter-spacing:0.09px">Authenticati...</span></span><svg style="position:absolute;left:313px;top:224px" width="16" height="16"><use href="#cert"/></svg><span class="t" style="left:331px;top:223px;line-height:19px;word-spacing:-0.34px;"><span style="letter-spacing:-0.22px">COMODO</span> <span class="w" style="width:21.00px;transform:scaleX(0.8506)">RSA</span> <span style="letter-spacing:0.13px">Certification</span> <span style="letter-spacing:-0.14px">Au...</span></span><span class="t" style="left:515px;top:223px;line-height:19px;word-spacing:-0.34px;"><span style="letter-spacing:-0.22px">COMODO</span> <span class="w" style="width:21.00px;transform:scaleX(0.8506)">RSA</span> <span style="letter-spacing:0.13px">Certification</span> <span style="letter-spacing:0.04px">Auth...</span></span><span class="t" style="left:715px;top:223px;line-height:19px;"><span class="w" style="width:54.00px;transform:scaleX(0.8991)">19.01.2038</span></span><span class="t" style="left:815px;top:223px;line-height:19px;word-spacing:-0.34px;"><span style="letter-spacing:0.05px">Client</span> <span style="letter-spacing:0.09px">Authenticati...</span></span><svg style="position:absolute;left:313px;top:243px" width="16" height="16"><use href="#cert"/></svg><span class="t" style="left:331px;top:242px;line-height:19px;word-spacing:-0.34px;"><span style="letter-spacing:0.18px">Copyright</span> (c) <span class="w" style="width:24.00px;transform:scaleX(0.8988)">1997</span> <span style="letter-spacing:0.26px">Microsoft</span> <span class="w" style="width:17.00px;transform:scaleX(0.9105)">C...</span></span><span class="t" style="left:515px;top:242px;line-height:19px;word-spacing:-0.34px;"><span style="letter-spacing:0.18px">Copyright</span> (c) <span class="w" style="width:24.00px;transform:scaleX(0.8988)">1997</span> <span style="letter-spacing:0.26px">Microsoft</span> <span style="letter-spacing:-0.07px">Corp.</span></span><span class="t" style="left:715px;top:242px;line-height:19px;"><span class="w" style="width:54.00px;transform:scaleX(0.8991)">31.12.1999</span></span><span class="t" style="left:815px;top:242px;line-height:19px;word-spacing:-0.34px;"><span class="w" style="width:25.00px;transform:scaleX(0.9529)">Time</span> <span style="letter-spacing:-0.09px">Stamping</span></span><svg style="position:absolute;left:313px;top:260px" width="16" height="16"><use href="#certkey"/></svg><span class="t" style="left:331px;top:261px;line-height:19px;"><span style="letter-spacing:-0.18px">dav.webspis.cz</span></span><span class="t" style="left:515px;top:261px;line-height:19px;"><span style="letter-spacing:-0.18px">dav.webspis.cz</span></span><span class="t" style="left:715px;top:261px;line-height:19px;"><span class="w" style="width:54.00px;transform:scaleX(0.8991)">01.04.2021</span></span><span class="t" style="left:815px;top:261px;line-height:19px;word-spacing:-0.34px;"><span style="letter-spacing:0.05px">Client</span> <span style="letter-spacing:0.09px">Authenticati...</span></span><svg style="position:absolute;left:313px;top:281px" width="16" height="16"><use href="#cert"/></svg><span class="t" style="left:331px;top:280px;line-height:19px;word-spacing:-0.34px;"><span style="letter-spacing:-0.04px">DigiCert</span> <span style="letter-spacing:-0.29px">Assured</span> <span class="w" style="width:11.00px;transform:scaleX(0.9167)">ID</span> <span style="letter-spacing:-0.09px">Root</span> <span class="w" style="width:16.00px;transform:scaleX(0.9597)">CA</span></span><span class="t" style="left:515px;top:280px;line-height:19px;word-spacing:-0.34px;"><span style="letter-spacing:-0.04px">DigiCert</span> <span style="letter-spacing:-0.29px">Assured</span> <span class="w" style="width:11.00px;transform:scaleX(0.9167)">ID</span> <span style="letter-spacing:-0.09px">Root</span> <span class="w" style="width:16.00px;transform:scaleX(0.9597)">CA</span></span><span class="t" style="left:715px;top:280px;line-height:19px;"><span class="w" style="width:54.00px;transform:scaleX(0.9126)">10.11.2031</span></span><span class="t" style="left:815px;top:280px;line-height:19px;word-spacing:-0.34px;"><span style="letter-spacing:0.05px">Client</span> <span style="letter-spacing:0.09px">Authenticati...</span></span><svg style="position:absolute;left:313px;top:300px" width="16" height="16"><use href="#cert"/></svg><span class="t" style="left:331px;top:299px;line-height:19px;word-spacing:-0.34px;"><span style="letter-spacing:-0.04px">DigiCert</span> <span style="letter-spacing:-0.11px">Global</span> <span style="letter-spacing:-0.09px">Root</span> <span class="w" style="width:16.00px;transform:scaleX(0.9597)">CA</span></span><span class="t" style="left:515px;top:299px;line-height:19px;word-spacing:-0.34px;"><span style="letter-spacing:-0.04px">DigiCert</span> <span style="letter-spacing:-0.11px">Global</span> <span style="letter-spacing:-0.09px">Root</span> <span class="w" style="width:16.00px;transform:scaleX(0.9597)">CA</span></span><span class="t" style="left:715px;top:299px;line-height:19px;"><span class="w" style="width:54.00px;transform:scaleX(0.9126)">10.11.2031</span></span><span class="t" style="left:815px;top:299px;line-height:19px;word-spacing:-0.34px;"><span style="letter-spacing:0.05px">Client</span> <span style="letter-spacing:0.09px">Authenticati...</span></span><svg style="position:absolute;left:313px;top:319px" width="16" height="16"><use href="#cert"/></svg><span class="t" style="left:331px;top:318px;line-height:19px;word-spacing:-0.34px;"><span style="letter-spacing:-0.04px">DigiCert</span> <span style="letter-spacing:-0.11px">Global</span> <span style="letter-spacing:-0.09px">Root</span> <span class="w" style="width:14.00px;transform:scaleX(0.8741)">G2</span></span><span class="t" style="left:515px;top:318px;line-height:19px;word-spacing:-0.34px;"><span style="letter-spacing:-0.04px">DigiCert</span> <span style="letter-spacing:-0.11px">Global</span> <span style="letter-spacing:-0.09px">Root</span> <span class="w" style="width:14.00px;transform:scaleX(0.8741)">G2</span></span><span class="t" style="left:715px;top:318px;line-height:19px;"><span class="w" style="width:54.00px;transform:scaleX(0.8991)">15.01.2038</span></span><span class="t" style="left:815px;top:318px;line-height:19px;word-spacing:-0.34px;"><span style="letter-spacing:0.05px">Client</span> <span style="letter-spacing:0.09px">Authenticati...</span></span><svg style="position:absolute;left:313px;top:338px" width="16" height="16"><use href="#cert"/></svg><span class="t" style="left:331px;top:337px;line-height:19px;word-spacing:-0.34px;"><span style="letter-spacing:-0.04px">DigiCert</span> <span class="w" style="width:26.00px;transform:scaleX(1.0532)">High</span> <span class="w" style="width:54.00px;transform:scaleX(0.9523)">Assurance</span> <span class="w" style="width:13.00px;transform:scaleX(0.8117)">EV</span> <span class="w" style="width:23.00px;transform:scaleX(0.9075)">Ro...</span></span><span class="t" style="left:515px;top:337px;line-height:19px;word-spacing:-0.34px;"><span style="letter-spacing:-0.04px">DigiCert</span> <span class="w" style="width:26.00px;transform:scaleX(1.0532)">High</span> <span class="w" style="width:54.00px;transform:scaleX(0.9523)">Assurance</span> <span class="w" style="width:13.00px;transform:scaleX(0.8117)">EV</span> <span style="letter-spacing:-0.09px">Root</span> <span class="w" style="width:9.00px;transform:scaleX(0.8986)">...</span></span><span class="t" style="left:715px;top:337px;line-height:19px;"><span class="w" style="width:54.00px;transform:scaleX(0.9126)">10.11.2031</span></span><span class="t" style="left:815px;top:337px;line-height:19px;word-spacing:-0.34px;"><span style="letter-spacing:0.05px">Client</span> <span style="letter-spacing:0.09px">Authenticati...</span></span><svg style="position:absolute;left:313px;top:357px" width="16" height="16"><use href="#cert"/></svg><span class="t" style="left:331px;top:356px;line-height:19px;"><span class="w" style="width:137.00px;transform:scaleX(0.9226)">DOMAIN-SERVER2016-CA</span></span><span class="t" style="left:515px;top:356px;line-height:19px;"><span class="w" style="width:137.00px;transform:scaleX(0.9226)">DOMAIN-SERVER2016-CA</span></span><span class="t" style="left:715px;top:356px;line-height:19px;"><span class="w" style="width:54.00px;transform:scaleX(0.9126)">11.06.2058</span></span><span class="t" style="left:815px;top:356px;line-height:19px;"><span class="w" style="width:30.00px;transform:scaleX(1.0965)">&lt;All&gt;</span></span><svg style="position:absolute;left:313px;top:376px" width="16" height="16"><use href="#cert"/></svg><span class="t" style="left:331px;top:375px;line-height:19px;"><span class="w" style="width:137.00px;transform:scaleX(0.9226)">DOMAIN-SERVER2016-CA</span></span><span class="t" style="left:515px;top:375px;line-height:19px;"><span class="w" style="width:137.00px;transform:scaleX(0.9226)">DOMAIN-SERVER2016-CA</span></span><span class="t" style="left:715px;top:375px;line-height:19px;"><span class="w" style="width:54.00px;transform:scaleX(0.8991)">03.05.2059</span></span><span class="t" style="left:815px;top:375px;line-height:19px;"><span class="w" style="width:30.00px;transform:scaleX(1.0965)">&lt;All&gt;</span></span><svg style="position:absolute;left:313px;top:395px" width="16" height="16"><use href="#cert"/></svg><span class="t" style="left:331px;top:394px;line-height:19px;"><span class="w" style="width:137.00px;transform:scaleX(0.9226)">DOMAIN-SERVER2016-CA</span></span><span class="t" style="left:515px;top:394px;line-height:19px;"><span class="w" style="width:137.00px;transform:scaleX(0.9226)">DOMAIN-SERVER2016-CA</span></span><span class="t" style="left:715px;top:394px;line-height:19px;"><span class="w" style="width:54.00px;transform:scaleX(0.9126)">11.06.2058</span></span><span class="t" style="left:815px;top:394px;line-height:19px;"><span class="w" style="width:30.00px;transform:scaleX(1.0965)">&lt;All&gt;</span></span><svg style="position:absolute;left:313px;top:414px" width="16" height="16"><use href="#cert"/></svg><span class="t" style="left:331px;top:413px;line-height:19px;"><span class="w" style="width:137.00px;transform:scaleX(0.9226)">DOMAIN-SERVER2016-CA</span></span><span class="t" style="left:515px;top:413px;line-height:19px;"><span class="w" style="width:137.00px;transform:scaleX(0.9226)">DOMAIN-SERVER2016-CA</span></span><span class="t" style="left:715px;top:413px;line-height:19px;"><span class="w" style="width:54.00px;transform:scaleX(0.8991)">03.05.2059</span></span><span class="t" style="left:815px;top:413px;line-height:19px;"><span class="w" style="width:30.00px;transform:scaleX(1.0965)">&lt;All&gt;</span></span><svg style="position:absolute;left:313px;top:433px" width="16" height="16"><use href="#cert"/></svg><span class="t" style="left:331px;top:432px;line-height:19px;word-spacing:-0.34px;"><span class="w" style="width:20.00px;transform:scaleX(0.8333)">DST</span> <span style="letter-spacing:-0.09px">Root</span> <span class="w" style="width:16.00px;transform:scaleX(0.9597)">CA</span> <span class="w" style="width:13.00px;transform:scaleX(0.8851)">X3</span></span><span class="t" style="left:515px;top:432px;line-height:19px;word-spacing:-0.34px;"><span class="w" style="width:20.00px;transform:scaleX(0.8333)">DST</span> <span style="letter-spacing:-0.09px">Root</span> <span class="w" style="width:16.00px;transform:scaleX(0.9597)">CA</span> <span class="w" style="width:13.00px;transform:scaleX(0.8851)">X3</span></span><span class="t" style="left:715px;top:432px;line-height:19px;"><span class="w" style="width:54.00px;transform:scaleX(0.8991)">30.09.2021</span></span><span class="t" style="left:815px;top:432px;line-height:19px;word-spacing:-0.34px;"><span style="letter-spacing:0.05px">Client</span> <span style="letter-spacing:0.09px">Authenticati...</span></span><svg style="position:absolute;left:313px;top:452px" width="16" height="16"><use href="#cert"/></svg><span class="t" style="left:331px;top:451px;line-height:19px;word-spacing:-0.34px;"><span style="letter-spacing:-0.15px">Entrust</span> <span style="letter-spacing:-0.09px">Root</span> <span style="letter-spacing:0.13px">Certification</span> <span style="letter-spacing:0.04px">Auth...</span></span><span class="t" style="left:515px;top:451px;line-height:19px;word-spacing:-0.34px;"><span style="letter-spacing:-0.15px">Entrust</span> <span style="letter-spacing:-0.09px">Root</span> <span style="letter-spacing:0.13px">Certification</span> <span style="letter-spacing:0.10px">Authori...</span></span><span class="t" style="left:715px;top:451px;line-height:19px;"><span class="w" style="width:54.00px;transform:scaleX(0.8991)">07.12.2030</span></span><span class="t" style="left:815px;top:451px;line-height:19px;word-spacing:-0.34px;"><span style="letter-spacing:0.05px">Client</span> <span style="letter-spacing:0.09px">Authenticati...</span></span><svg style="position:absolute;left:313px;top:469px" width="16" height="16"><use href="#certkey"/></svg><span class="t" style="left:331px;top:470px;line-height:19px;word-spacing:-0.34px;"><span class="w" style="width:24.00px;transform:scaleX(0.7657)">ESET</span> <span class="w" style="width:18.00px;transform:scaleX(0.7934)">SSL</span> <span style="letter-spacing:-0.11px">Filter</span> <span class="w" style="width:16.00px;transform:scaleX(0.9597)">CA</span></span><span class="t" style="left:515px;top:470px;line-height:19px;word-spacing:-0.34px;"><span class="w" style="width:24.00px;transform:scaleX(0.7657)">ESET</span> <span class="w" style="width:18.00px;transform:scaleX(0.7934)">SSL</span> <span style="letter-spacing:-0.11px">Filter</span> <span class="w" style="width:16.00px;transform:scaleX(0.9597)">CA</span></span><span class="t" style="left:715px;top:470px;line-height:19px;"><span class="w" style="width:54.00px;transform:scaleX(0.9126)">11.02.2029</span></span><span class="t" style="left:815px;top:470px;line-height:19px;"><span class="w" style="width:30.00px;transform:scaleX(1.0965)">&lt;All&gt;</span></span><svg style="position:absolute;left:313px;top:490px" width="16" height="16"><use href="#cert"/></svg><span class="t" style="left:331px;top:489px;line-height:19px;word-spacing:-0.34px;"><span class="w" style="width:47.00px;transform:scaleX(0.9480)">GeoTrust</span> <span style="letter-spacing:-0.11px">Global</span> <span class="w" style="width:16.00px;transform:scaleX(0.9597)">CA</span></span><span class="t" style="left:515px;top:489px;line-height:19px;word-spacing:-0.34px;"><span class="w" style="width:47.00px;transform:scaleX(0.9480)">GeoTrust</span> <span style="letter-spacing:-0.11px">Global</span> <span class="w" style="width:16.00px;transform:scaleX(0.9597)">CA</span></span><span class="t" style="left:715px;top:489px;line-height:19px;"><span class="w" style="width:54.00px;transform:scaleX(0.8991)">21.05.2022</span></span><span class="t" style="left:815px;top:489px;line-height:19px;word-spacing:-0.34px;"><span style="letter-spacing:0.05px">Client</span> <span style="letter-spacing:0.09px">Authenticati...</span></span><svg style="position:absolute;left:313px;top:509px" width="16" height="16"><use href="#cert"/></svg><span class="t" style="left:331px;top:508px;line-height:19px;word-spacing:-0.34px;"><span class="w" style="width:47.00px;transform:scaleX(0.9480)">GeoTrust</span> <span style="letter-spacing:-0.19px">Primary</span> <span style="letter-spacing:0.13px">Certification</span> <span class="w" style="width:9.00px;transform:scaleX(0.8986)">...</span></span><span class="t" style="left:515px;top:508px;line-height:19px;word-spacing:-0.34px;"><span class="w" style="width:47.00px;transform:scaleX(0.9480)">GeoTrust</span> <span style="letter-spacing:-0.19px">Primary</span> <span style="letter-spacing:0.13px">Certification</span> <span style="letter-spacing:-0.14px">Au...</span></span><span class="t" style="left:715px;top:508px;line-height:19px;"><span class="w" style="width:54.00px;transform:scaleX(0.8991)">02.12.2037</span></span><span class="t" style="left:815px;top:508px;line-height:19px;word-spacing:-0.34px;"><span class="w" style="width:32.00px;transform:scaleX(0.9054)">Server</span> <span style="letter-spacing:0.09px">Authenticati...</span></span><svg style="position:absolute;left:313px;top:528px" width="16" height="16"><use href="#cert"/></svg><span class="t" style="left:331px;top:527px;line-height:19px;"><span style="letter-spacing:-0.17px">GlobalSign</span></span><span class="t" style="left:515px;top:527px;line-height:19px;"><span style="letter-spacing:-0.17px">GlobalSign</span></span><span class="t" style="left:715px;top:527px;line-height:19px;"><span class="w" style="width:54.00px;transform:scaleX(0.8991)">18.03.2029</span></span><span class="t" style="left:815px;top:527px;line-height:19px;word-spacing:-0.34px;"><span style="letter-spacing:0.05px">Client</span> <span style="letter-spacing:0.09px">Authenticati...</span></span><div style="position:absolute;left:948px;top:84px;width:16px;height:462px;background:#f0f0f0"></div><div style="position:absolute;left:948px;top:101px;width:15px;height:193px;background:#cdcdcd"></div><svg style="position:absolute;left:951px;top:88px" width="9" height="8" viewBox="0 0 9 8"><path d="M1.1 6.2 L4.5 2.4 L7.9 6.2" fill="none" stroke="#555" stroke-width="1.9"/></svg><svg style="position:absolute;left:951px;top:533px" width="9" height="8" viewBox="0 0 9 8"><path d="M1.1 1.8 L4.5 5.6 L7.9 1.8" fill="none" stroke="#555" stroke-width="1.9"/></svg><div style="position:absolute;left:309px;top:546px;width:655px;height:16px;background:#f0f0f0"></div><div style="position:absolute;left:326px;top:546px;width:427px;height:15px;background:#cdcdcd"></div><svg style="position:absolute;left:313px;top:549px" width="8" height="9" viewBox="0 0 8 9"><path d="M6.4 1.2 L2.2 4.5 L6.4 7.8" fill="none" stroke="#555" stroke-width="1.9"/></svg><svg style="position:absolute;left:935px;top:549px" width="8" height="9" viewBox="0 0 8 9"><path d="M1.6 1.2 L5.8 4.5 L1.6 7.8" fill="none" stroke="#555" stroke-width="1.9"/></svg><span class="t" style="left:3px;top:568px;line-height:18px;word-spacing:-0.34px;"><span style="letter-spacing:0.21px">Add</span> <span style="letter-spacing:-0.69px">a</span> <span style="letter-spacing:0.06px">certificate</span> <span class="w" style="width:11.00px;transform:scaleX(1.0983)">to</span> <span style="letter-spacing:-0.69px">a</span> <span style="letter-spacing:-0.14px">store</span></span><div style="position:absolute;left:122px;top:148px;width:153px;height:137px;background:#f2f2f2;border:1px solid #cccccc;box-sizing:border-box"></div><div style="position:absolute;left:125px;top:151px;width:145px;height:22px;background:#91c9f7"></div><span class="t" style="left:157px;top:151px;line-height:22px;word-spacing:-0.34px;"><span style="letter-spacing:0.22px">All</span> <span class="w" style="width:28.00px;transform:scaleX(0.9124)">Tasks</span></span><span class="t" style="left:157px;top:180px;line-height:22px;"><span style="letter-spacing:-0.20px">View</span></span><span class="t" style="left:157px;top:209px;line-height:22px;"><span class="w" style="width:39.00px;transform:scaleX(0.9279)">Refresh</span></span><span class="t" style="left:157px;top:231px;line-height:22px;word-spacing:-0.34px;"><span style="letter-spacing:-0.11px">Export</span> <span style="letter-spacing:-0.24px">List...</span></span><span class="t" style="left:157px;top:260px;line-height:22px;"><span style="letter-spacing:0.08px">Help</span></span><div style="position:absolute;left:153px;top:176px;width:119px;height:1px;background:#d7d7d7"></div><div style="position:absolute;left:153px;top:205px;width:119px;height:1px;background:#d7d7d7"></div><div style="position:absolute;left:153px;top:256px;width:119px;height:1px;background:#d7d7d7"></div><svg style="position:absolute;left:257px;top:157px" width="7" height="10" viewBox="0 0 7 10"><path d="M1.6 1.2 L5.4 5 L1.6 8.8" fill="none" stroke="#404040" stroke-width="1.15"/></svg><svg style="position:absolute;left:257px;top:186px" width="7" height="10" viewBox="0 0 7 10"><path d="M1.6 1.2 L5.4 5 L1.6 8.8" fill="none" stroke="#404040" stroke-width="1.15"/></svg><div style="position:absolute;left:269px;top:148px;width:135px;height:28px;background:#f2f2f2;border:1px solid #cccccc;box-sizing:border-box"></div><div style="position:absolute;left:272px;top:151px;width:129px;height:22px;background:#91c9f7"></div><span class="t" style="left:305px;top:151px;line-height:22px;">Import...</span><svg style="position:absolute;left:0;top:0" width="966" height="588"><path fill="#ff0000" fill-rule="evenodd" d="M61 113 H366 A46 46 0 0 1 412 159 V243 A46 46 0 0 1 366 289 H61 A46 46 0 0 1 15 243 V159 A46 46 0 0 1 61 113 Z M61 115 A43 44 0 0 0 18 159 V243 A43 44 0 0 0 61 287 H366 A43 44 0 0 0 409 243 V159 A43 44 0 0 0 366 115 Z"/></svg>
</body></html>
